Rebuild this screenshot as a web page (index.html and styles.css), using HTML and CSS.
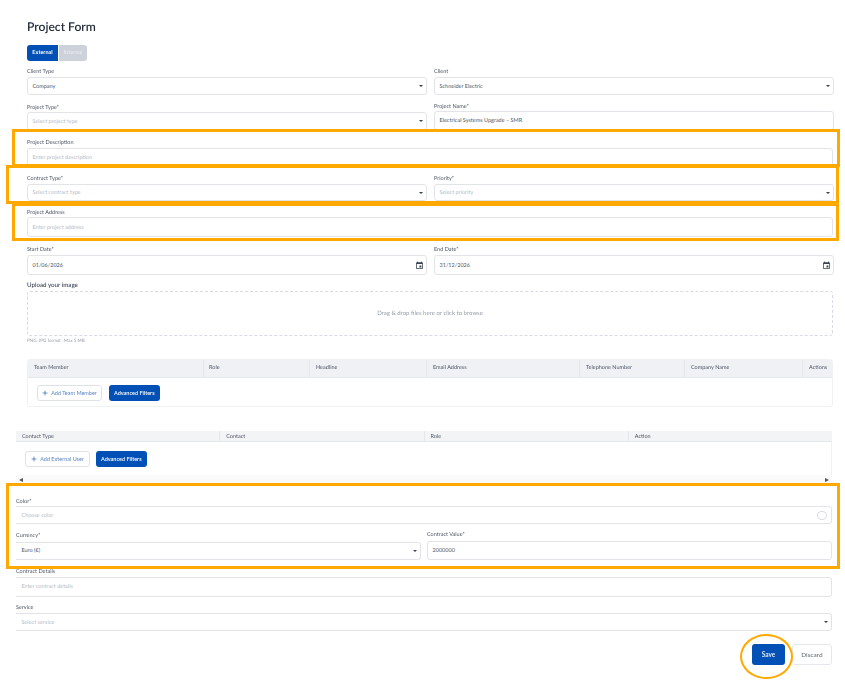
FILE: index.html
```html
<!DOCTYPE html>
<html>
<head>
    <meta charset="UTF-8">
    <title>Project Form</title>
    <link rel="stylesheet" href="styles.css">
</head>
<body>
<div class="page">
    <section class="main">
        <h1>Project Form</h1>
        <div class="toggle">
            <span class="toggle-on">External</span>
            <span class="toggle-off">Internal</span>
        </div>

        <div class="row two first">
            <div class="field">
                <label>Client Type</label>
                <div class="control select h18">Company</div>
            </div>
            <div class="field">
                <label>Client</label>
                <div class="control select h18">Schneider Electric</div>
            </div>
        </div>
        <div class="row two mt7">
            <div class="field tight">
                <label>Project Type*</label>
                <div class="control select h18 empty">Select project type</div>
            </div>
            <div class="field tight">
                <label>Project Name*</label>
                <div class="control h19">Electrical Systems Upgrade – SMR</div>
            </div>
        </div>
        <div class="row">
            <div class="field">
                <label>Project Description</label>
                <div class="control h19 empty">Enter project description</div>
            </div>
        </div>
        <div class="row two mt7">
            <div class="field">
                <label>Contract Type*</label>
                <div class="control select h17 empty">Select contract type</div>
            </div>
            <div class="field">
                <label>Priority*</label>
                <div class="control select h17 empty">Select priority</div>
            </div>
        </div>
        <div class="row mt7">
            <div class="field tight">
                <label>Project Address</label>
                <div class="control h20 empty">Enter project address</div>
            </div>
        </div>
        <div class="row two">
            <div class="field">
                <label>Start Date*</label>
                <div class="control date h20">01/06/2026
                    <svg viewBox="0 0 24 24"><path d="M17 12h-5v5h5v-5zM16 1v2H8V1H6v2H5c-1.11 0-1.99.9-1.99 2L3 19c0 1.1.89 2 2 2h14c1.1 0 2-.9 2-2V5c0-1.1-.9-2-2-2h-1V1h-2zm3 18H5V8h14v11z"/></svg>
                </div>
            </div>
            <div class="field">
                <label>End Date*</label>
                <div class="control date h20">31/12/2026
                    <svg viewBox="0 0 24 24"><path d="M17 12h-5v5h5v-5zM16 1v2H8V1H6v2H5c-1.11 0-1.99.9-1.99 2L3 19c0 1.1.89 2 2 2h14c1.1 0 2-.9 2-2V5c0-1.1-.9-2-2-2h-1V1h-2zm3 18H5V8h14v11z"/></svg>
                </div>
            </div>
        </div>

        <div class="upload-label">Upload your image</div>
        <div class="dropzone">Drag &amp; drop files here or click to browse</div>
        <div class="hint">PNG, JPG format . Max 5 MB</div>

        <div class="table team">
            <div class="thead">
                <div class="th c1">Team Member</div>
                <div class="th c2">Role</div>
                <div class="th c3">Headline</div>
                <div class="th c4">Email Address</div>
                <div class="th c5">Telephone Number</div>
                <div class="th c6">Company Name</div>
                <div class="th c7">Actions</div>
            </div>
            <div class="tbody">
                <button class="btn-outline">
                    <svg viewBox="0 0 10 10"><path d="M5 1v8M1 5h8"/></svg>
                    Add Team Member
                </button>
                <button class="btn-primary">Advanced Filters</button>
            </div>
        </div>
    </section>

    <section class="lower">
        <div class="table external">
            <div class="thead">
                <div class="th">Contact Type</div>
                <div class="th">Contact</div>
                <div class="th">Role</div>
                <div class="th">Action</div>
            </div>
            <div class="tbody">
                <button class="btn-outline">
                    <svg viewBox="0 0 10 10"><path d="M5 1v8M1 5h8"/></svg>
                    Add External User
                </button>
                <button class="btn-primary">Advanced Filters</button>
            </div>
            <div class="scrollbar">
                <span class="arrow-left"></span>
                <span class="arrow-right"></span>
            </div>
        </div>

        <div class="row color-row">
            <div class="field flush">
                <label>Color*</label>
                <div class="control color h18 empty">Choose color <span class="swatch"></span></div>
            </div>
        </div>
        <div class="row two-lower mt7">
            <div class="field">
                <label>Currency*</label>
                <div class="control select h18">Euro (€)</div>
            </div>
            <div class="field">
                <label>Contract Value*</label>
                <div class="control h19">2000000</div>
            </div>
        </div>
        <div class="row mt7">
            <div class="field">
                <label class="details-label">Contract Details</label>
                <div class="control h20 empty">Enter contract details</div>
            </div>
        </div>
        <div class="row mt7">
            <div class="field tight">
                <label>Service</label>
                <div class="control select h18 empty">Select service</div>
            </div>
        </div>
        <div class="actions">
            <button class="save">Save</button>
            <button class="discard">Discard</button>
        </div>
    </section>

    <!-- orange callouts drawn over the form -->
    <div class="mark mark-desc"></div>
    <div class="mark mark-contract"></div>
    <div class="mark mark-address"></div>
    <div class="mark mark-money"></div>
    <div class="mark mark-save"></div>
</div>
</body>
</html>
```

FILE: styles.css
```css
* {
    box-sizing: border-box;
}
body {
    margin: 0;
    background-color: #fff;
    font-family: Lato, "Noto Sans", sans-serif;
    color: #4b5563;
    overflow: hidden;
    text-rendering: geometricPrecision;
}
/* the reference is a soft, upscaled capture */
.page {
    position: relative;
    width: 845px;
    height: 685px;
    filter: blur(0.4px);
}
.main {
    padding: 19px 12px 0 27px;
}
.lower {
    padding: 24px 13px 0 16px;
}
h1 {
    margin: 0;
    font-size: 12.1px;
    line-height: 15px;
    font-weight: 600;
    color: #1f2937;
}
.toggle {
    display: flex;
    width: 60px;
    height: 16px;
    margin-top: 11px;
    border-radius: 3px;
    overflow: hidden;
    font-size: 5.5px;
    font-weight: 700;
    line-height: 16px;
    text-align: center;
}
.toggle-on {
    width: 31px;
    background-color: #0050b5;
    color: #fff;
}
.toggle-off {
    flex: 1;
    margin-left: 1px;
    background-color: #cdd1d9;
    color: #e6e8ec;
}
.row {
    margin-top: 8px;
}
.row.first {
    margin-top: 6px;
}
.row.mt7 {
    margin-top: 7px;
}
.two {
    display: grid;
    grid-template-columns: 400px 400px;
    gap: 7px;
    align-items: end;
}
.two-lower {
    display: grid;
    grid-template-columns: 405px 405px;
    gap: 6px;
    align-items: end;
}
label {
    display: block;
    height: 8px;
    margin-bottom: 2px;
    font-size: 5.5px;
    line-height: 8px;
    color: #4b5563;
}
.main label,
.details-label {
    line-height: 10px;
}
.tight label {
    margin-bottom: 1px;
}
.flush label {
    margin-bottom: 0;
}
.control {
    position: relative;
    display: flex;
    align-items: center;
    padding: 0 4.5px;
    border: 1px solid #e2e4e8;
    border-radius: 3px;
    background-color: #fff;
    font-size: 5.5px;
    color: #4b5563;
}
.first .control,
.tight .control,
.date,
.color {
    padding-top: 1px;
}
.lower .field:first-child > .control {
    padding-left: 5.5px;
    border-left: 0;
    border-radius: 0 3px 3px 0;
}
.empty {
    color: #b4bac5;
}
.h17 {
    height: 17px;
}
.h18 {
    height: 18px;
}
.h19 {
    height: 19px;
}
.h20 {
    height: 20px;
}
.select::after {
    content: "";
    position: absolute;
    right: 3px;
    top: 50%;
    margin-top: -1px;
    border-left: 2px solid transparent;
    border-right: 2px solid transparent;
    border-top: 2.5px solid #374151;
}
.date {
    justify-content: space-between;
}
.date svg {
    width: 9px;
    height: 9px;
    margin-right: -2px;
    fill: #374151;
}
.upload-label {
    margin-top: 6px;
    height: 8px;
    margin-bottom: 2px;
    font-size: 6.2px;
    line-height: 10px;
    font-weight: 500;
    color: #374151;
}
.dropzone {
    display: flex;
    align-items: center;
    justify-content: center;
    height: 45px;
    padding-bottom: 1px;
    border: 1px dashed #d9dbe0;
    border-radius: 3px;
    font-size: 6px;
    color: #9aa0aa;
}
.hint {
    margin-top: 1px;
    font-size: 4.5px;
    line-height: 8px;
    color: #9aa0aa;
}
.table {
    border-radius: 3px;
}
.team {
    margin-top: 14px;
    height: 48px;
    border: 1px solid #f0f1f3;
}
.thead {
    display: flex;
    border-bottom: 1px solid #e5e7eb;
    background-color: #f0f1f5;
    font-size: 5.5px;
    color: #4b5563;
}
.team .thead {
    height: 18px;
    line-height: 17px;
}
.team .th {
    padding-left: 6px;
    border-left: 1px solid #e5e7eb;
}
.team .th.c1 {
    width: 175px;
    border-left: 0;
}
.team .th.c2 {
    padding-left: 5px;
}
.c2 {
    width: 106px;
}
.c3 {
    width: 117px;
}
.c4 {
    width: 153px;
}
.c5 {
    width: 105px;
}
.c6 {
    width: 118px;
}
.c7 {
    flex: 1;
}
.tbody {
    display: flex;
    gap: 7px;
    align-items: flex-start;
}
.team .tbody {
    padding: 7px 0 0 9px;
}
.external .thead {
    height: 11px;
    line-height: 12px;
    background-color: #f3f4f5;
}
.external .th {
    flex: 1;
    padding-left: 6px;
    border-left: 1px solid #e5e7eb;
}
.external .th:first-child {
    border-left: 0;
}
.external .tbody {
    gap: 6px;
    padding: 9px 0 0 9px;
    height: 33px;
    border-right: 1px solid #f0f1f3;
}
.btn-outline,
.btn-primary {
    display: flex;
    align-items: center;
    justify-content: center;
    height: 16px;
    padding: 0;
    border-radius: 3px;
    font-family: inherit;
    font-size: 5.5px;
}
.btn-outline {
    width: 65px;
    gap: 3px;
    border: 1px solid #dfe2e7;
    background-color: #fff;
    color: #5b86c4;
}
.btn-outline svg {
    width: 6px;
    height: 6px;
    fill: none;
    stroke: #1f5fb0;
    stroke-width: 1.1;
}
.btn-primary {
    width: 50.5px;
    border: 0;
    background-color: #0050b5;
    color: #fff;
    font-weight: 600;
}
.scrollbar {
    display: flex;
    justify-content: space-between;
    align-items: center;
    height: 9px;
    padding: 0 3px;
    background-color: #fafafa;
}
.arrow-left {
    border-top: 2.5px solid transparent;
    border-bottom: 2.5px solid transparent;
    border-right: 4px solid #555;
}
.arrow-right {
    border-top: 2.5px solid transparent;
    border-bottom: 2.5px solid transparent;
    border-left: 4px solid #555;
}
.color-row {
    margin-top: 14px;
}
.color {
    justify-content: space-between;
}
.swatch {
    width: 10px;
    height: 9px;
    border: 1px solid #d9dbe0;
    border-radius: 50%;
}
.actions {
    display: flex;
    justify-content: flex-end;
    gap: 7px;
    margin-top: 13px;
}
.save,
.discard {
    height: 21px;
    padding: 0;
    border-radius: 3px;
    font-family: inherit;
    font-size: 6.5px;
}
.save {
    width: 33px;
    border: 0;
    background-color: #0050b5;
    color: #dfe7f5;
    font-weight: 700;
}
.discard {
    width: 40px;
    border: 1px solid #e5e7eb;
    background-color: #fff;
    color: #6b7280;
    font-weight: 500;
}
.mark {
    position: absolute;
    border: 3px solid #ffa900;
    pointer-events: none;
}
.mark-desc {
    left: 12px;
    top: 129px;
    width: 828px;
    height: 38px;
}
.mark-contract {
    left: 6px;
    top: 165px;
    width: 833px;
    height: 39px;
}
.mark-address {
    left: 12px;
    top: 203px;
    width: 827px;
    height: 38px;
}
.mark-money {
    left: 6px;
    top: 483px;
    width: 834px;
    height: 86px;
}
.mark-save {
    left: 740px;
    top: 634px;
    width: 53px;
    height: 45px;
    border-width: 2.5px;
    border-radius: 50%;
}
```
